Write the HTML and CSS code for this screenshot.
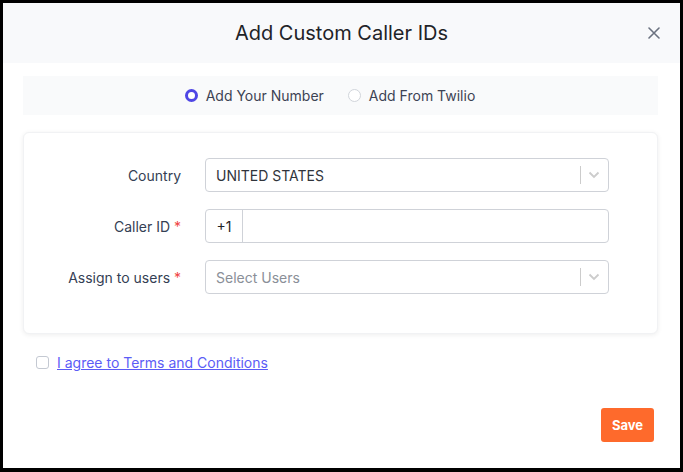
FILE: index.html
```html
<!DOCTYPE html>
<html>
<head>
<meta charset="utf-8">
<link rel="stylesheet" href="styles.css">
</head>
<body>
<div class="modal">
  <div class="modal-header">
    <h1 class="title">Add Custom Caller IDs</h1>
    <button class="close" aria-label="Close">
      <svg width="12" height="12" viewBox="0 0 12 12"><path d="M1 1L11 11M11 1L1 11" stroke="#6b7280" stroke-width="1.6" stroke-linecap="round"/></svg>
    </button>
  </div>
  <div class="modal-body">
    <div class="radio-band">
      <label class="radio"><span class="dot checked"></span>Add Your Number</label>
      <label class="radio"><span class="dot"></span>Add From Twilio</label>
    </div>
    <div class="card">
      <div class="form-grid">
        <div class="label">Country</div>
        <div class="field select">
          <span class="value">UNITED STATES</span>
          <span class="sep"></span>
          <svg class="chev" width="12" height="8" viewBox="0 0 12 8"><path d="M1.5 1.5L6 6L10.5 1.5" fill="none" stroke="#cccccc" stroke-width="1.8"/></svg>
        </div>
        <div class="label">Caller ID <span class="req">*</span></div>
        <div class="field phone">
          <span class="prefix">+1</span>
          <span class="num"></span>
        </div>
        <div class="label">Assign to users <span class="req">*</span></div>
        <div class="field select">
          <span class="value placeholder">Select Users</span>
          <span class="sep"></span>
          <svg class="chev" width="12" height="8" viewBox="0 0 12 8"><path d="M1.5 1.5L6 6L10.5 1.5" fill="none" stroke="#cccccc" stroke-width="1.8"/></svg>
        </div>
      </div>
    </div>
    <div class="agree">
      <span class="checkbox"></span>
      <a class="terms" href="#">I agree to Terms and Conditions</a>
    </div>
  </div>
  <div class="modal-footer">
    <button class="save">Save</button>
  </div>
</div>
</body>
</html>
```
FILE: styles.css
```css
* { box-sizing: border-box; }
html, body { margin: 0; padding: 0; }
body {
  background: #000;
  width: 683px;
  height: 472px;
  padding: 3px 3px 4px 3px;
  font-family: Inter, "Noto Sans", sans-serif;
}
.modal {
  width: 677px;
  height: 465px;
  background: #fff;
  display: flex;
  flex-direction: column;
}
.modal-header {
  height: 60px;
  background: #f8f9fb;
  display: flex;
  align-items: center;
  justify-content: center;
  position: relative;
}
.title {
  margin: 0;
  font-size: 20px;
  font-weight: 400;
  color: #1f2328;
}
.close {
  position: absolute;
  right: 20px;
  top: 24px;
  border: none;
  background: none;
  padding: 0;
  width: 12px;
  height: 12px;
  display: flex;
}
.modal-body {
  padding: 13px 22px 0 20px;
  flex: 1;
}
.radio-band {
  height: 39px;
  background: #f9fafb;
  display: flex;
  align-items: center;
  justify-content: center;
  gap: 24px;
  padding-right: 21px;
}
.radio {
  display: flex;
  align-items: center;
  gap: 8px;
  font-size: 14px;
  color: #3d4354;
}
.dot {
  width: 13px;
  height: 13px;
  border-radius: 50%;
  border: 1px solid #d1d5db;
  background: #fff;
}
.dot.checked {
  border: 3.5px solid #4f46e5;
}
.card {
  margin-top: 17px;
  height: 202px;
  background: #fff;
  border: 1px solid #f1f2f4;
  border-radius: 6px;
  box-shadow: 0 1px 5px rgba(0, 0, 0, 0.07);
  padding: 25px 48px 0 0;
}
.form-grid {
  display: grid;
  grid-template-columns: 157px 1fr;
  column-gap: 24px;
  row-gap: 17px;
  align-items: center;
}
.label {
  text-align: right;
  font-size: 14px;
  color: #344054;
}
.req { color: #ef4444; }
.field {
  height: 34px;
  border: 1px solid #cfd2d8;
  border-radius: 4px;
  display: flex;
  align-items: center;
  font-size: 14px;
  color: #30343b;
}
.select .value {
  flex: 1;
  padding-left: 10px;
}
.placeholder { color: #8a8f98; }
.sep {
  width: 1px;
  height: 18px;
  background: #cccccc;
}
.chev {
  margin: 0 8px 0 7px;
}
.phone .prefix {
  width: 37px;
  height: 100%;
  border-right: 1px solid #cfd2d8;
  display: flex;
  align-items: center;
  justify-content: center;
  color: #1f2328;
}
.agree {
  margin-top: 20px;
  display: flex;
  align-items: center;
  gap: 8px;
  padding-left: 13px;
}
.checkbox {
  width: 13px;
  height: 13px;
  border: 1px solid #c4c9d2;
  border-radius: 3px;
  background: #fff;
}
.terms {
  font-size: 14px;
  color: #5b5cf6;
  text-decoration: underline;
}
.modal-footer {
  display: flex;
  justify-content: flex-end;
  padding: 0 26px 26px 0;
}
.save {
  width: 53px;
  height: 34px;
  border: none;
  border-radius: 3px;
  background: #fe6a2c;
  color: #fff;
  font-family: Inter, sans-serif;
  font-weight: 700;
  font-size: 13px;
}
```
